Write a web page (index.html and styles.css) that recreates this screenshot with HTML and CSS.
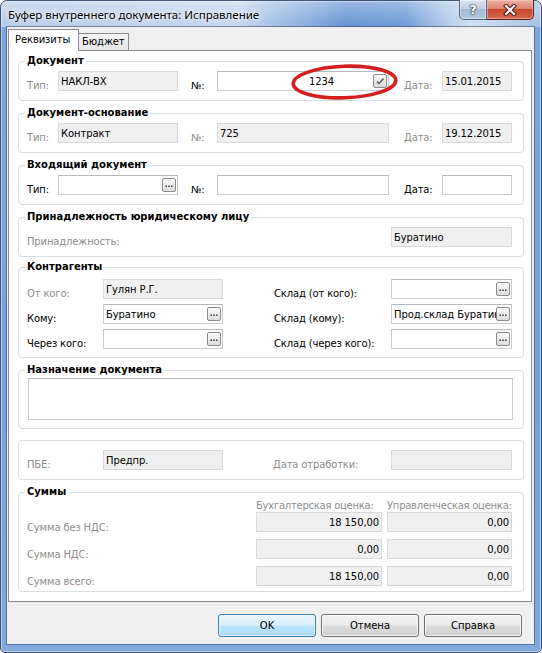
FILE: index.html
```html
<!DOCTYPE html>
<html lang="ru">
<head>
<meta charset="utf-8">
<title>Буфер внутреннего документа: Исправление</title>
<link rel="stylesheet" href="styles.css">
</head>
<body>
<div class="window">
  <div class="titlebar">
    <div class="title">Буфер внутреннего документа: Исправление</div>
    <div class="caption">
      <div class="cap help">?</div>
      <div class="cap close">
        <svg width="14" height="12" viewBox="0 0 14 12"><path d="M3 2 L11 10 M11 2 L3 10" stroke="#4a1a10" stroke-width="4.2" stroke-linecap="square"/><path d="M3 2 L11 10 M11 2 L3 10" stroke="#ffffff" stroke-width="2.2" stroke-linecap="square"/></svg>
      </div>
    </div>
  </div>
  <div class="client">
    <div class="tabs">
      <div class="tab active">Реквизиты</div>
      <div class="tab">Бюджет</div>
    </div>
    <div class="panel">
      <div class="group g-doc">
        <div class="gtitle">Документ</div>
        <div class="row r-doc">
          <span class="lbl dis w-tip">Тип:</span>
          <div class="f ro w120"><span class="t">НАКЛ-ВХ</span></div>
          <span class="lbl w-no">№:</span>
          <div class="f w172"><span class="t off">1234</span><span class="eb"><svg width="12" height="12" viewBox="0 0 12 12"><path d="M3 6.5 L5 8.5 L9.5 3.5" fill="none" stroke="#5a5a5a" stroke-width="1.5"/></svg></span><svg class="ring" width="107" height="36" viewBox="0 0 107 36"><ellipse cx="53.5" cy="18" rx="51.3" ry="15.8" fill="none" stroke="#d41f1f" stroke-width="3.6" transform="rotate(-2 53.5 18)"/></svg></div>
          <span class="lbl dis w-date">Дата:</span>
          <div class="f ro w70"><span class="t">15.01.2015</span></div>
        </div>
      </div>

      <div class="group g-base">
        <div class="gtitle">Документ-основание</div>
        <div class="row r-doc">
          <span class="lbl dis w-tip">Тип:</span>
          <div class="f ro w120"><span class="t">Контракт</span></div>
          <span class="lbl dis w-no">№:</span>
          <div class="f ro w172"><span class="t">725</span></div>
          <span class="lbl dis w-date">Дата:</span>
          <div class="f ro w70"><span class="t">19.12.2015</span></div>
        </div>
      </div>

      <div class="group g-in">
        <div class="gtitle">Входящий документ</div>
        <div class="row r-doc">
          <span class="lbl w-tip">Тип:</span>
          <div class="f w120"><span class="t"></span><span class="eb"><svg width="12" height="12" viewBox="0 0 12 12"><rect x="2.5" y="6.5" width="1.4" height="1.4" fill="#222"/><rect x="5.3" y="6.5" width="1.4" height="1.4" fill="#222"/><rect x="8.1" y="6.5" width="1.4" height="1.4" fill="#222"/></svg></span></div>
          <span class="lbl w-no">№:</span>
          <div class="f w172"><span class="t"></span></div>
          <span class="lbl w-date">Дата:</span>
          <div class="f w70"><span class="t"></span></div>
        </div>
      </div>

      <div class="group g-own">
        <div class="gtitle">Принадлежность юридическому лицу</div>
        <div class="row r-doc">
          <span class="lbl dis pl8">Принадлежность:</span>
          <div class="f ro w121 push"><span class="t">Буратино</span></div>
        </div>
      </div>

      <div class="group g-ctr">
        <div class="gtitle">Контрагенты</div>
        <div class="rows">
          <div class="row">
            <span class="lbl dis lc">От кого:</span>
            <div class="f ro w120"><span class="t">Гулян Р.Г.</span></div>
            <span class="lbl rc">Склад (от кого):</span>
            <div class="f w121"><span class="t"></span><span class="eb"><svg width="12" height="12" viewBox="0 0 12 12"><rect x="2.5" y="6.5" width="1.4" height="1.4" fill="#222"/><rect x="5.3" y="6.5" width="1.4" height="1.4" fill="#222"/><rect x="8.1" y="6.5" width="1.4" height="1.4" fill="#222"/></svg></span></div>
          </div>
          <div class="row">
            <span class="lbl lc">Кому:</span>
            <div class="f w120"><span class="t">Буратино</span><span class="eb"><svg width="12" height="12" viewBox="0 0 12 12"><rect x="2.5" y="6.5" width="1.4" height="1.4" fill="#222"/><rect x="5.3" y="6.5" width="1.4" height="1.4" fill="#222"/><rect x="8.1" y="6.5" width="1.4" height="1.4" fill="#222"/></svg></span></div>
            <span class="lbl rc">Склад (кому):</span>
            <div class="f w121"><span class="t">Прод.склад Буратино</span><span class="eb"><svg width="12" height="12" viewBox="0 0 12 12"><rect x="2.5" y="6.5" width="1.4" height="1.4" fill="#222"/><rect x="5.3" y="6.5" width="1.4" height="1.4" fill="#222"/><rect x="8.1" y="6.5" width="1.4" height="1.4" fill="#222"/></svg></span></div>
          </div>
          <div class="row">
            <span class="lbl lc">Через кого:</span>
            <div class="f w120"><span class="t"></span><span class="eb"><svg width="12" height="12" viewBox="0 0 12 12"><rect x="2.5" y="6.5" width="1.4" height="1.4" fill="#222"/><rect x="5.3" y="6.5" width="1.4" height="1.4" fill="#222"/><rect x="8.1" y="6.5" width="1.4" height="1.4" fill="#222"/></svg></span></div>
            <span class="lbl rc">Склад (через кого):</span>
            <div class="f w121"><span class="t"></span><span class="eb"><svg width="12" height="12" viewBox="0 0 12 12"><rect x="2.5" y="6.5" width="1.4" height="1.4" fill="#222"/><rect x="5.3" y="6.5" width="1.4" height="1.4" fill="#222"/><rect x="8.1" y="6.5" width="1.4" height="1.4" fill="#222"/></svg></span></div>
          </div>
        </div>
      </div>

      <div class="group g-purpose">
        <div class="gtitle">Назначение документа</div>
        <div class="ta"></div>
      </div>

      <div class="group g-pbe">
        <div class="row">
          <span class="lbl dis lc">ПБЕ:</span>
          <div class="f ro w120"><span class="t">Предпр.</span></div>
          <span class="lbl dis rc2">Дата отработки:</span>
          <div class="f ro w121"><span class="t"></span></div>
        </div>
      </div>

      <div class="group g-sum">
        <div class="gtitle">Суммы</div>
        <div class="row hdr">
          <span class="sc0"></span>
          <span class="dis sh1">Бухгалтерская оценка:</span>
          <span class="dis sh2">Управленческая оценка:</span>
        </div>
        <div class="rows sums">
          <div class="row">
            <span class="lbl dis sc0 sl">Сумма без НДС:</span>
            <div class="f ro w126"><span class="t num">18 150,00</span></div>
            <div class="f ro w125 gap5"><span class="t num">0,00</span></div>
          </div>
          <div class="row">
            <span class="lbl dis sc0 sl">Сумма НДС:</span>
            <div class="f ro w126"><span class="t num">0,00</span></div>
            <div class="f ro w125 gap5"><span class="t num">0,00</span></div>
          </div>
          <div class="row">
            <span class="lbl dis sc0 sl">Сумма всего:</span>
            <div class="f ro w126"><span class="t num">18 150,00</span></div>
            <div class="f ro w125 gap5"><span class="t num">0,00</span></div>
          </div>
        </div>
      </div>
    </div>
    <div class="actions">
      <div class="btn default">OK</div>
      <div class="btn">Отмена</div>
      <div class="btn">Справка</div>
    </div>
  </div>
</div>
</body>
</html>
```

FILE: styles.css
```css
* { box-sizing: border-box; }
html, body { margin: 0; padding: 0; }
body {
  width: 542px;
  height: 653px;
  overflow: hidden;
  background: #ffffff;
  font-family: "DejaVu Sans", Verdana, sans-serif;
  font-size: 10px;
  color: #000;
}

.window {
  width: 542px;
  height: 653px;
  border: 1px solid #3d5679;
  border-radius: 7px 7px 5px 5px;
  padding: 0 7px 8px 6px;
  display: flex;
  flex-direction: column;
  background:
    linear-gradient(180deg, rgba(255,255,255,0.35) 0, rgba(255,255,255,0) 26px) top left / 100% 26px no-repeat,
    linear-gradient(90deg, #b4cbe9 0%, #c2d6ef 44%, #8db0de 55%, #6393d2 64%, #6d9ad5 75%, #b4cceb 83%, #cfdff2 87%, #a3bfe4 100%) top left / 100% 26px no-repeat,
    linear-gradient(180deg, #7ea6da 0%, #76a0d7 60%, #80a9dc 100%);
  box-shadow: inset 0 0 0 1px rgba(255,255,255,0.45);
}

.titlebar {
  height: 26px;
  flex-shrink: 0;
  display: flex;
  justify-content: space-between;
  align-items: flex-start;
}
.title {
  margin: 6px 0 0 1px;
  font-family: "Noto Sans", "Open Sans", sans-serif;
  font-size: 11.5px;
  line-height: 16px;
  color: #000;
  text-shadow: 0 0 6px rgba(255,255,255,0.95), 0 0 3px rgba(255,255,255,0.9);
}
.caption {
  display: flex;
  margin-top: -1px;
}
.cap { height: 20px; }
.help {
  width: 28px;
  border: 1px solid #4f6383;
  border-top: none;
  border-radius: 0 0 0 5px;
  background: linear-gradient(180deg, #dbe5f1 0%, #c3d1e4 45%, #a6b9d3 50%, #b3c6de 100%);
  box-shadow: inset 0 0 0 1px rgba(255,255,255,0.45);
  color: #fff;
  font: bold 13px "DejaVu Sans", sans-serif;
  line-height: 19px;
  text-align: center;
  text-shadow: 0 0 2px #1d2a3d, 0 0 1px #1d2a3d, 0 0 1px #1d2a3d;
}
.close {
  width: 47px;
  border: 1px solid #5b2219;
  border-top: none;
  border-left: none;
  border-radius: 0 0 5px 0;
  background: linear-gradient(180deg, #ecb0a3 0%, #de8572 45%, #c9462f 50%, #d5694f 100%);
  box-shadow: inset 0 0 0 1px rgba(255,220,210,0.45);
  display: flex;
  align-items: center;
  justify-content: center;
}

.client {
  flex: 1;
  display: flex;
  flex-direction: column;
  background: #f0f0f0;
  box-shadow: 0 0 0 1px rgba(45,70,110,0.55);
}

.tabs {
  height: 23px;
  flex-shrink: 0;
  display: flex;
  align-items: flex-end;
  padding-left: 1px;
}
.tab {
  height: 17px;
  width: 51px;
  margin-left: -1px;
  border: 1px solid #898c95;
  border-bottom: none;
  background: linear-gradient(180deg, #f4f4f4 0%, #e6e6e6 100%);
  padding: 1px 0 0 3px;
  line-height: 14px;
  white-space: nowrap;
  letter-spacing: -0.1px;
}
.tab.active {
  height: 22px;
  width: 71px;
  margin-left: 0;
  margin-bottom: -1px;
  background: #fff;
  position: relative;
  z-index: 1;
  padding: 3px 0 0 6px;
}

.panel {
  margin-left: 1px;
  width: 524px;
  height: 552px;
  flex-shrink: 0;
  border: 1px solid #898c95;
  background: #fff;
  padding: 10px 0 0 9px;
}

.group {
  width: 506px;
  border: 1px solid #d5dfe5;
  border-radius: 4px;
}
.gtitle {
  display: table;
  margin: -8px 0 0 6px;
  padding: 0 2px;
  background: #fff;
  font-weight: bold;
  line-height: 14px;
  white-space: nowrap;
}
.g-doc { height: 40px; }
.g-base { height: 40px; margin-top: 12px; }
.g-in { height: 40px; margin-top: 12px; }
.g-own { height: 40px; margin-top: 12px; padding-right: 11px; }
.g-ctr { height: 91px; margin-top: 10px; }
.g-purpose { height: 59px; margin-top: 12px; }
.g-pbe { height: 40px; margin-top: 11px; padding-top: 9px; }
.g-sum { height: 100px; margin-top: 12px; }

.row { display: flex; align-items: flex-start; }
.r-doc { margin-top: 3px; }
.rows { display: flex; flex-direction: column; gap: 4px; margin-top: 5px; }
.rows.sums { gap: 5px; margin-top: 0; }

.lbl {
  flex-shrink: 0;
  padding-top: 8px;
  line-height: 13px;
  white-space: nowrap;
  letter-spacing: -0.15px;
}
.dis { color: #8d8d8d; }
.w-tip { width: 39px; padding-left: 8px; }
.w-no { width: 39px; padding-left: 13px; }
.w-date { width: 53px; padding-left: 15px; }
.pl8 { padding-left: 8px; }
.lc { width: 84px; padding-left: 8px; }
.rc { width: 168px; padding-left: 51px; }
.rc2 { width: 168px; padding-left: 50px; }

.f {
  height: 20px;
  flex-shrink: 0;
  position: relative;
  display: flex;
  align-items: center;
  border: 1px solid #c9cdd3;
  border-top-color: #b5b9bf;
  background: #fff;
  padding: 0 1px 0 2px;
}
.f.ro {
  background: #f0f0f0;
  border-color: #d9d9d9;
}
.f .t {
  flex: 1;
  min-width: 0;
  overflow: hidden;
  white-space: nowrap;
  line-height: 13px;
  letter-spacing: -0.1px;
}
.f .t.off { padding-left: 89px; }
.f .t.num { text-align: right; padding-right: 1px; }
.w70 { width: 70px; }
.w120 { width: 120px; }
.w121 { width: 121px; }
.w125 { width: 125px; }
.w126 { width: 126px; }
.w172 { width: 172px; }
.push { margin-left: auto; }
.gap5 { margin-left: 5px; }

.eb {
  flex-shrink: 0;
  width: 14px;
  height: 14px;
  border: 1px solid #8b8b8b;
  border-radius: 2px;
  background: linear-gradient(180deg, #fbfbfb 0%, #ececec 50%, #dcdcdc 100%);
  display: flex;
  align-items: center;
  justify-content: center;
}
.eb svg { display: block; }

.ring {
  position: absolute;
  left: 73px;
  top: -8px;
  overflow: visible;
  pointer-events: none;
}

.ta {
  width: 485px;
  height: 42px;
  margin: 1px 0 0 9px;
  border: 1px solid #c9cdd3;
  border-top-color: #b5b9bf;
  background: #fff;
}

.hdr { line-height: 13px; white-space: nowrap; letter-spacing: -0.25px; }
.sc0 { width: 237px; flex-shrink: 0; }
.sl { padding-left: 8px; padding-top: 9px; }
.sh1 { width: 131px; flex-shrink: 0; }
.sh2 { width: 125px; flex-shrink: 0; }

.actions {
  flex: 1;
  display: flex;
  justify-content: flex-end;
  align-items: flex-start;
  gap: 5px;
  padding: 12px 12px 0 0;
}
.btn {
  width: 98px;
  height: 23px;
  border: 1px solid #707070;
  border-radius: 3px;
  background: linear-gradient(180deg, #f2f2f2 0%, #ebebeb 49%, #dddddd 51%, #cfcfcf 100%);
  box-shadow: inset 0 0 0 1px rgba(255,255,255,0.8);
  display: flex;
  align-items: center;
  justify-content: center;
  line-height: 13px;
}
.btn.default {
  border-color: #3c7fb1;
  background: linear-gradient(180deg, #eaf6fd 0%, #d9f0fc 49%, #bee6fd 51%, #a7d9f5 100%);
  box-shadow: inset 0 0 0 1px rgba(255,255,255,0.6);
}
```
